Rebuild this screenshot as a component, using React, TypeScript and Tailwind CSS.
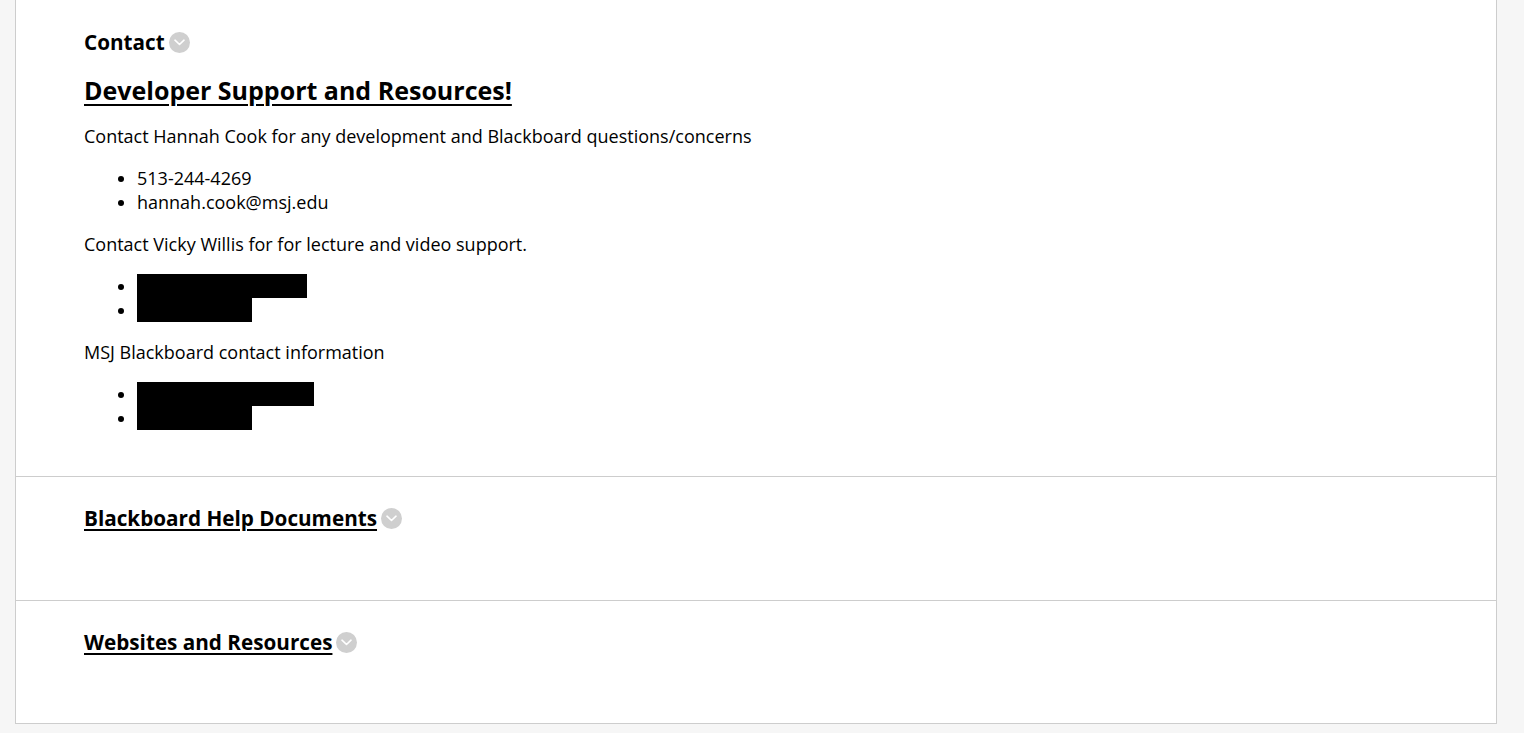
import { ReactNode } from "react";

export default function App() {
  return (
    <div
      className="min-h-screen bg-[#f6f6f6] pl-[15px] pr-[27px] text-black"
      style={{ fontFamily: '"Open Sans", "Liberation Sans", sans-serif' }}
    >
      <div className="bg-white border-x border-b border-[#cdcdcd]">
        <div className="flex flex-col gap-[18px] pl-[68px] pt-[28px] pb-[46px]">
          <h2 className="flex items-center text-[20.7px] leading-[28px] font-bold">
            Contact
            <Chevron />
          </h2>
          <h1 className="text-[25px] leading-[32px] font-bold underline underline-offset-[4px] decoration-[2px]">
            Developer Support and Resources!
          </h1>
          <p className="text-[18px] leading-[24px]">
            Contact Hannah Cook for any development and Blackboard
            questions/concerns
          </p>
          <ul className="list-disc pl-[53px] text-[18px] leading-[24px]">
            <li>513-244-4269</li>
            <li>hannah.cook@msj.edu</li>
          </ul>
          <p className="text-[18px] leading-[24px]">
            Contact Vicky Willis for for lecture and video support.
          </p>
          <ul className="list-disc pl-[53px] text-[18px] leading-[24px]">
            <Redacted width="w-[170px]" />
            <Redacted width="w-[115px]" />
          </ul>
          <p className="text-[18px] leading-[24px]">
            MSJ Blackboard contact information
          </p>
          <ul className="list-disc pl-[53px] text-[18px] leading-[24px]">
            <Redacted width="w-[177px]" />
            <Redacted width="w-[115px]" />
          </ul>
        </div>
        <Section title="Blackboard Help Documents" pad="pb-[68px]" />
        <Section title="Websites and Resources" pad="pb-[67px]" />
      </div>
    </div>
  );
}

const Section = ({ title, pad }: { title: string; pad: string }) => {
  return (
    <div className={`border-t border-[#cdcdcd] pl-[68px] pt-[27px] ${pad}`}>
      <h2 className="flex items-center text-[20.7px] leading-[28px] font-bold">
        <span className="underline underline-offset-[3px] decoration-[2px]">
          {title}
        </span>
        <Chevron />
      </h2>
    </div>
  );
};

const Redacted = ({ width }: { width: string }) => {
  return (
    <li>
      <span className={`inline-block align-top h-[24px] bg-black ${width}`} />
    </li>
  );
};

const Chevron = (): ReactNode => {
  return (
    <span className="ml-[4px] inline-flex h-[21px] w-[21px] items-center justify-center rounded-full bg-[#cfcfcf]">
      <svg width="11" height="7" viewBox="0 0 11 7" fill="none">
        <path
          d="M1 1.2 L5.5 5.5 L10 1.2"
          stroke="white"
          strokeWidth="1.6"
          strokeLinecap="round"
          strokeLinejoin="round"
        />
      </svg>
    </span>
  );
};
